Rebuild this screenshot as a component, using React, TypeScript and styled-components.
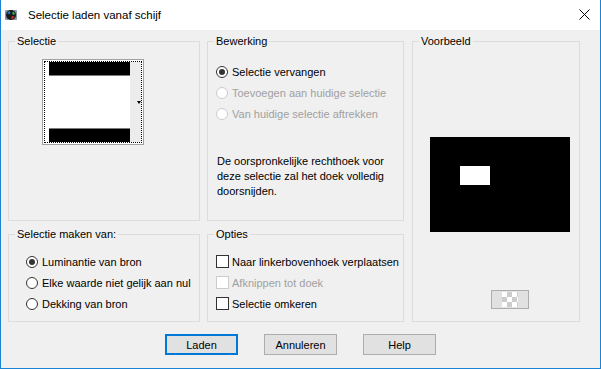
import React from 'react';
import styled, { createGlobalStyle } from 'styled-components';

const GlobalStyle = createGlobalStyle`
  html, body {
    margin: 0;
    padding: 0;
    background: #ffffff;
  }
  body {
    font-family: "Liberation Sans", Arial, sans-serif;
    font-size: 11px;
    color: #000;
  }
`;

const Window = styled.div`
  width: 601px;
  height: 369px;
  box-sizing: border-box;
  border: 1px solid #1883d7;
  border-top: none;
  display: flex;
  flex-direction: column;
  background: #f0f0f0;
`;

const TitleBar = styled.div`
  height: 30px;
  flex: none;
  background: #ffffff;
  display: flex;
  align-items: center;
  padding: 0 10px 1px 3px;
  box-sizing: border-box;
`;

const TitleText = styled.span`
  font-size: 11.5px;
  margin-left: 10px;
`;

const CloseButton = styled.span`
  margin-left: auto;
  display: flex;
`;

const Groups = styled.div`
  display: grid;
  grid-template-columns: 192px 197px 169px;
  grid-template-rows: 180px 88px;
  grid-template-areas:
    "sel edit prev"
    "src opts prev";
  column-gap: 7px;
  row-gap: 13px;
  margin: 11px 0 0 7px;
`;

const GroupBox = styled.div<{ $area: string; $shift?: boolean }>`
  grid-area: ${p => p.$area};
  border: 1px solid #dcdcdc;
  display: flex;
  flex-direction: column;
  align-items: flex-start;
  margin-left: ${p => (p.$shift ? '1px' : '0')};
`;

const Caption = styled.div`
  margin: -7px 0 0 6px;
  padding: 0 2px;
  height: 13px;
  line-height: 13px;
  background: #f0f0f0;
  white-space: nowrap;
`;

const OptionList = styled.div<{ $top: number; $left: number }>`
  display: flex;
  flex-direction: column;
  margin: ${p => p.$top}px 0 0 ${p => p.$left}px;
`;

const OptionRow = styled.div<{ $disabled?: boolean }>`
  display: flex;
  align-items: center;
  height: 21px;
  white-space: nowrap;
  color: ${p => (p.$disabled ? '#a0a0a0' : '#000')};
`;

const RadioMark = styled.span<{ $checked?: boolean; $disabled?: boolean }>`
  width: 12px;
  height: 12px;
  box-sizing: border-box;
  border-radius: 50%;
  border: 1px solid ${p => (p.$disabled ? '#cccccc' : '#333333')};
  background: #ffffff;
  margin-right: 4px;
  display: flex;
  align-items: center;
  justify-content: center;
  &::after {
    content: '';
    width: 6px;
    height: 6px;
    border-radius: 50%;
    background: #333333;
    display: ${p => (p.$checked ? 'block' : 'none')};
  }
`;

const CheckMark = styled.span<{ $disabled?: boolean }>`
  width: 13px;
  height: 13px;
  box-sizing: border-box;
  border: 1px solid ${p => (p.$disabled ? '#cccccc' : '#333333')};
  background: #ffffff;
  margin-right: 3px;
`;

const Description = styled.div`
  margin: 30px 0 0 9px;
  line-height: 15px;
  white-space: nowrap;
`;

/* thumbnail picker in "Selectie" */
const Thumb = styled.div`
  margin: 11px 0 0 33px;
  width: 102px;
  height: 86px;
  box-sizing: border-box;
  border: 1px solid #a0a0a0;
  background: #ffffff;
  padding: 1px;
  display: flex;
`;

const FocusRect = styled.div`
  flex: 1;
  border: 1px dotted #000000;
  display: flex;
  padding-left: 4px;
`;

const ThumbImage = styled.div`
  flex: 1;
  display: flex;
  flex-direction: column;
  justify-content: space-between;
`;

const Bar = styled.div<{ $bottom?: boolean }>`
  height: 13px;
  background: #000000;
  border-top: ${p => (p.$bottom ? '1px solid #7a7a7a' : 'none')};
  border-bottom: ${p => (p.$bottom ? 'none' : '1px solid #7a7a7a')};
`;

const ThumbStrip = styled.div`
  width: 11px;
  background: #ececec;
  display: flex;
  align-items: center;
  justify-content: flex-end;
`;

const Arrow = styled.span`
  width: 0;
  height: 0;
  border-left: 2px solid transparent;
  border-right: 2px solid transparent;
  border-top: 3px solid #000;
`;

/* Voorbeeld */
const PreviewCanvas = styled.div`
  margin: 89px 0 0 17px;
  width: 140px;
  height: 95px;
  background: #000000;
  padding: 29px 0 0 30px;
  box-sizing: border-box;
`;

const PreviewSelection = styled.div`
  width: 30px;
  height: 19px;
  background: #ffffff;
`;

const CheckerButton = styled.div`
  margin: 58px 0 0 78px;
  width: 38px;
  height: 19px;
  box-sizing: border-box;
  border: 1px solid #adadad;
  background: #e1e1e1;
  display: flex;
  align-items: center;
  justify-content: center;
`;

const Checker = styled.div`
  width: 16px;
  height: 15px;
  background-color: #ffffff;
  background-image: conic-gradient(#cccccc 25%, #ffffff 0 50%, #cccccc 0 75%, #ffffff 0);
  background-size: 10px 10px;
`;

const ButtonRow = styled.div`
  display: flex;
  justify-content: center;
  gap: 26px;
  margin-top: 12px;
`;

const Button = styled.button<{ $default?: boolean }>`
  width: 73px;
  height: 21px;
  box-sizing: border-box;
  padding: 0;
  background: #e1e1e1;
  border: 1px solid ${p => (p.$default ? '#0078d7' : '#adadad')};
  box-shadow: ${p => (p.$default ? 'inset 0 0 0 1px #0078d7' : 'none')};
  font-family: "Liberation Sans", Arial, sans-serif;
  font-size: 11px;
  color: #000;
`;

const AppIcon = () => (
  <svg width="14" height="14" viewBox="0 0 14 14">
    <rect x="1" y="2" width="12" height="10" rx="1" fill="#8a96a3" />
    <circle cx="7" cy="7" r="5" fill="#1a1a1a" />
    <path d="M3.2 5.5 A4 4 0 0 1 6 3.1 L6.6 5.3 A2 2 0 0 0 5.2 6.2 Z" fill="#1f74d6" />
    <path d="M9.2 3.6 A4 4 0 0 1 10.9 6.4 L8.9 6.8 A2 2 0 0 0 8 5.4 Z" fill="#2fb84a" />
    <path d="M10.5 8.8 A4 4 0 0 1 7.6 10.9 L7.3 8.9 A2 2 0 0 0 8.7 8 Z" fill="#d9302b" />
  </svg>
);

const CloseIcon = () => (
  <svg width="11" height="11" viewBox="0 0 11 11">
    <path d="M0.5 0.5 L10.5 10.5 M10.5 0.5 L0.5 10.5" stroke="#000" strokeWidth="1" />
  </svg>
);

type Option = { label: string; checked?: boolean; disabled?: boolean };

const bewerking: Option[] = [
  { label: 'Selectie vervangen', checked: true },
  { label: 'Toevoegen aan huidige selectie', disabled: true },
  { label: 'Van huidige selectie aftrekken', disabled: true },
];

const bron: Option[] = [
  { label: 'Luminantie van bron', checked: true },
  { label: 'Elke waarde niet gelijk aan nul' },
  { label: 'Dekking van bron' },
];

const opties: Option[] = [
  { label: 'Naar linkerbovenhoek verplaatsen' },
  { label: 'Afknippen tot doek', disabled: true },
  { label: 'Selectie omkeren' },
];

export default function App() {
  return (
    <>
      <GlobalStyle />
      <Window>
        <TitleBar>
          <AppIcon />
          <TitleText>Selectie laden vanaf schijf</TitleText>
          <CloseButton>
            <CloseIcon />
          </CloseButton>
        </TitleBar>

        <Groups>
          <GroupBox $area="sel">
            <Caption>Selectie</Caption>
            <Thumb>
              <FocusRect>
                <ThumbImage>
                  <Bar />
                  <Bar $bottom />
                </ThumbImage>
                <ThumbStrip>
                  <Arrow />
                </ThumbStrip>
              </FocusRect>
            </Thumb>
          </GroupBox>

          <GroupBox $area="edit">
            <Caption>Bewerking</Caption>
            <OptionList $top={13} $left={8}>
              {bewerking.map(o => (
                <OptionRow key={o.label} $disabled={o.disabled}>
                  <RadioMark $checked={o.checked} $disabled={o.disabled} />
                  {o.label}
                </OptionRow>
              ))}
            </OptionList>
            <Description>
              De oorspronkelijke rechthoek voor
              <br />
              deze selectie zal het doek volledig
              <br />
              doorsnijden.
            </Description>
          </GroupBox>

          <GroupBox $area="prev" $shift>
            <Caption>Voorbeeld</Caption>
            <PreviewCanvas>
              <PreviewSelection />
            </PreviewCanvas>
            <CheckerButton>
              <Checker />
            </CheckerButton>
          </GroupBox>

          <GroupBox $area="src">
            <Caption>Selectie maken van:</Caption>
            <OptionList $top={10} $left={17}>
              {bron.map(o => (
                <OptionRow key={o.label} $disabled={o.disabled}>
                  <RadioMark $checked={o.checked} $disabled={o.disabled} />
                  {o.label}
                </OptionRow>
              ))}
            </OptionList>
          </GroupBox>

          <GroupBox $area="opts">
            <Caption>Opties</Caption>
            <OptionList $top={10} $left={8}>
              {opties.map(o => (
                <OptionRow key={o.label} $disabled={o.disabled}>
                  <CheckMark $disabled={o.disabled} />
                  {o.label}
                </OptionRow>
              ))}
            </OptionList>
          </GroupBox>
        </Groups>

        <ButtonRow>
          <Button $default>Laden</Button>
          <Button>Annuleren</Button>
          <Button>Help</Button>
        </ButtonRow>
      </Window>
    </>
  );
}
